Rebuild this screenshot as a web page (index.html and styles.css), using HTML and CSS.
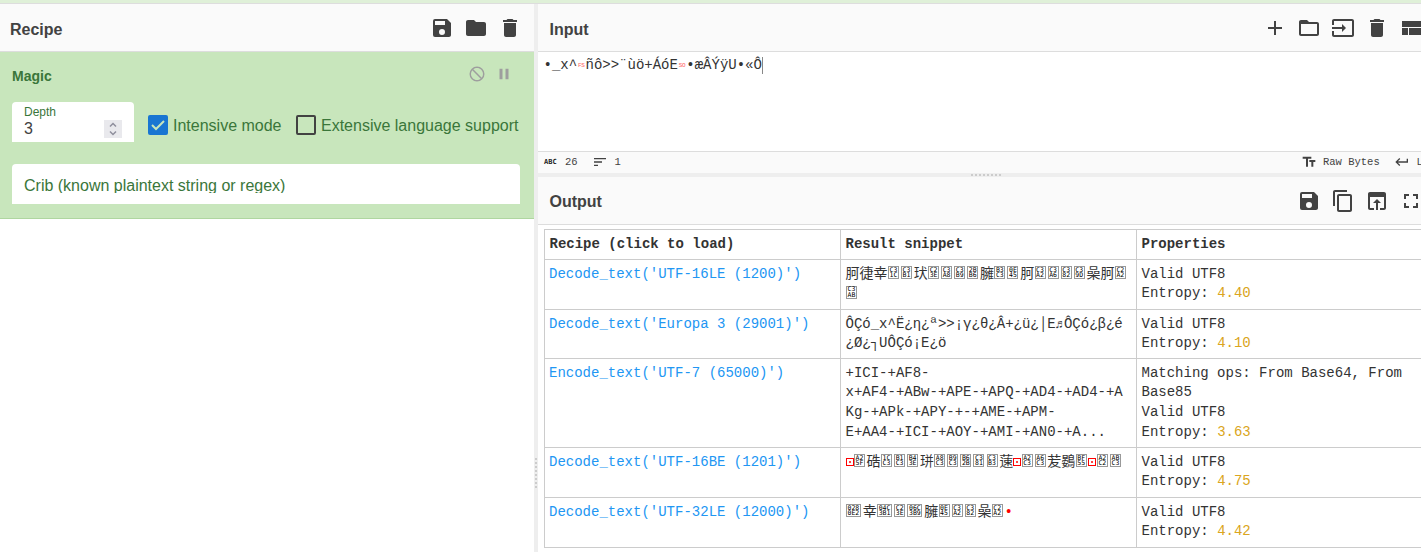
FILE: index.html
```html
<!DOCTYPE html>
<html lang="en">
<head>
<meta charset="utf-8">
<title>Recipe</title>
<link rel="stylesheet" href="styles.css">
</head>
<body>
<div class="banner"></div>
<main class="workspace">
  <section class="recipe">
    <header class="title-bar upper"><h2>Recipe</h2>
      <div class="tools recipe-tools">
        <svg viewBox="0 0 24 24"><path d="M17 3H5a2 2 0 0 0-2 2v14a2 2 0 0 0 2 2h14c1.1 0 2-.9 2-2V7l-4-4zm-5 16a3 3 0 1 1 0-6 3 3 0 0 1 0 6zm3-10H5V5h10v4z"/></svg>
        <svg viewBox="0 0 24 24"><path d="M10 4H4c-1.1 0-2 .9-2 2v12c0 1.1.9 2 2 2h16c1.1 0 2-.9 2-2V8c0-1.100-.9-2-2-2h-8l-2-2z"/></svg>
        <svg viewBox="0 0 24 24"><path d="M6 19c0 1.100.9 2 2 2h8c1.100 0 2-.9 2-2V7H6v12zM19 4h-3.500l-1-1h-5l-1 1H5v2h14V4z"/></svg>
      </div>
    </header>
    <div class="operation">
      <div class="op-head"><b>Magic</b>
        <div class="op-icons">
          <svg viewBox="0 0 24 24"><path d="M12 2a10 10 0 1 0 0 20 10 10 0 0 0 0-20zM4 12c0-4.400 3.600-8 8-8 1.850 0 3.550.63 4.900 1.690L5.690 16.900A7.900 7.900 0 0 1 4 12zm8 8c-1.850 0-3.550-.63-4.900-1.690L18.310 7.100A7.900 7.900 0 0 1 20 12c0 4.400-3.600 8-8 8z" transform="matrix(-1 0 0 1 24 0)"/></svg>
          <svg viewBox="0 0 24 24"><path d="M6 19h4V5H6v14zm8-14v14h4V5h-4z"/></svg>
        </div>
      </div>
      <div class="args">
        <div class="depth"><div><label>Depth</label><span>3</span></div>
          <svg class="spin" viewBox="0 0 18 18"><path d="M6 6.500l3-3 3 3M6 11.500l3 3 3-3"/></svg>
        </div>
        <div class="check first"><svg viewBox="0 0 20 20"><rect width="20" height="20" rx="2" fill="#1976d2"/><path d="M4 10l4 4 8-8" fill="none" stroke="#c8e6bc" stroke-width="2"/></svg><span>Intensive mode</span></div>
        <div class="check"><svg viewBox="0 0 20 20"><rect x="1" y="1" width="18" height="18" rx="1" fill="none" stroke="#424242" stroke-width="2"/></svg><span>Extensive language support</span></div>
      </div>
      <div class="crib"><span>Crib (known plaintext string or regex)</span></div>
    </div>
  </section>
  <div class="gutter-v"><i></i></div>
  <section class="io">
    <header class="title-bar upper"><h2>Input</h2>
      <div class="tools">
        <svg viewBox="0 0 24 24"><path d="M19 13h-6v6h-2v-6H5v-2h6V5h2v6h6v2z"/></svg>
        <svg viewBox="0 0 24 24"><path d="M20 6h-8l-2-2H4c-1.100 0-2 .9-2 2v12c0 1.100.9 2 2 2h16c1.100 0 2-.9 2-2V8c0-1.100-.9-2-2-2zm0 12H4V8h16v10z"/></svg>
        <svg viewBox="0 0 24 24"><path d="M21 3H3c-1.100 0-2 .9-2 2v4h2V5h18v14H3v-4H1v4c0 1.100.9 2 2 2h18c1.100 0 2-.9 2-2V5c0-1.100-.9-2-2-2zM11 16l4-4-4-4v3H1v2h10v3z"/></svg>
        <svg viewBox="0 0 24 24"><path d="M6 19c0 1.100.9 2 2 2h8c1.100 0 2-.9 2-2V7H6v12zM19 4h-3.500l-1-1h-5l-1 1H5v2h14V4z"/></svg>
        <svg viewBox="0 0 24 24"><path d="M3 19h6v-7H3v7zm7 0h12v-7H10v7zM3 5v6h19V5H3z"/></svg>
      </div>
    </header>
    <div class="editor">•_x^<span class="ctl">FS</span>ñô&gt;&gt;¨ùö+ÁóE<span class="ctl">SO</span>•æÂÝÿU•«Ô<span class="caret"></span></div>
    <div class="status">
      <span class="abc">ABC</span><span class="count">26</span>
      <svg viewBox="0 0 24 24"><path d="M3 18h6v-2H3v2zM3 6v2h18V6H3zm0 7h12v-2H3v2z"/></svg><span class="lines">1</span>
      <div class="status-right">
        <svg viewBox="0 0 24 24"><path d="M2.500 4v3h5v12h3V7h5V4h-13zm19 5h-9v3h3v7h3v-7h3V9z"/></svg><span class="raw">Raw Bytes</span>
        <svg viewBox="0 0 24 24"><path d="M19 7v4H5.830l3.580-3.590L8 6l-6 6 6 6 1.410-1.410L5.830 13H21V7z"/></svg><span>LF</span>
      </div>
    </div>
    <div class="gutter-h"><i></i></div>
    <header class="title-bar"><h2>Output</h2>
      <div class="tools out-tools">
        <svg viewBox="0 0 24 24"><path d="M17 3H5a2 2 0 0 0-2 2v14a2 2 0 0 0 2 2h14c1.100 0 2-.9 2-2V7l-4-4zm-5 16a3 3 0 1 1 0-6 3 3 0 0 1 0 6zm3-10H5V5h10v4z"/></svg>
        <svg viewBox="0 0 24 24"><path d="M16 1H4c-1.100 0-2 .9-2 2v14h2V3h12V1zm3 4H8c-1.100 0-2 .9-2 2v14c0 1.100.9 2 2 2h11c1.100 0 2-.9 2-2V7c0-1.100-.9-2-2-2zm0 16H8V7h11v14z"/></svg>
        <svg viewBox="0 0 24 24"><path d="M19 3H5c-1.110 0-2 .9-2 2v14c0 1.100.89 2 2 2h4v-2H5V8h14v11h-4v2h4c1.100 0 2-.9 2-2V5c0-1.100-.89-2-2-2zm-7 7l-4 4h3v7h2v-7h3l-4-4z"/></svg>
        <svg viewBox="0 0 24 24"><path d="M7 14H5v5h5v-2H7v-3zm-2-4h2V7h3V5H5v5zm12 7h-3v2h5v-5h-2v3zM14 5v2h3v3h2V5h-5z"/></svg>
      </div>
    </header>
    <div class="results">
      <div class="cell th">Recipe (click to load)</div><div class="cell th">Result snippet</div><div class="cell th">Properties</div>

      <div class="cell link">Decode_text('UTF-16LE (1200)')</div>
      <div class="cell">胢徢幸<s>C3<br>1C</s><s>C3<br>B1</s>㺴<s>C2<br>3E</s><s>C3<br>A8</s><s>C3<br>B9</s><s>2B<br>B6</s>臃<s>B3<br>C3</s><s>0E<br>45</s>胢<s>C3<br>A2</s><s>C3<br>A6</s><s>C3<br>82</s><s>C3<br>9D</s>喿胢<s>C2<br>A2</s><br><s>C3<br>AB</s></div>
      <div class="cell">Valid UTF8<br>Entropy: <em>4.40</em></div>

      <div class="cell link">Decode_text('Europa 3 (29001)')</div>
      <div class="cell">ÔÇó_x^Ë¿η¿ª&gt;&gt;¡γ¿θ¿Â+¿ü¿│E<span class="note">♬</span>ÔÇó¿β¿é<br>¿Ø¿┐UÔÇó¡E¿ö</div>
      <div class="cell">Valid UTF8<br>Entropy: <em>4.10</em></div>

      <div class="cell link">Encode_text('UTF-7 (65000)')</div>
      <div class="cell">+ICI-+AF8-<br>x+AF4-+ABw-+APE-+APQ-+AD4-+AD4-+A<br>Kg-+APk-+APY-+-+AME-+APM-<br>E+AA4-+ICI-+AOY-+AMI-+AN0-+A...</div>
      <div class="cell">Matching ops: From Base64, From<br>Base85<br>Valid UTF8<br>Entropy: <em>3.63</em></div>

      <div class="cell link">Decode_text('UTF-16BE (1201)')</div>
      <div class="cell"><u></u><s>A2<br>5F</s>硞<s>1C<br>C3</s><s>B1<br>C3</s><s>B4<br>3E</s>㻂<s>A8<br>C3</s><s>B9<br>C3</s><s>B6<br>2B</s><s>C3<br>81</s><s>C3<br>B3</s>䔎<u></u><s>A2<br>C3</s><s>A6<br>C3</s>苃鷃<s>BF<br>55</s><u></u><s>A2<br>C2</s><s>AB<br>C3</s></div>
      <div class="cell">Valid UTF8<br>Entropy: <em>4.75</em></div>

      <div class="cell link">Decode_text('UTF-32LE (12000)')</div>
      <div class="cell"><s class="w">028<br>0E2</s>幸<s class="w">04C<br>3B1</s><s>C2<br>3E</s><s class="w">06C<br>3B9</s>臃<s>0E<br>45</s><s>C3<br>A2</s><s>C3<br>82</s>喿<s>C2<br>A2</s><span class="red">•</span></div>
      <div class="cell">Valid UTF8<br>Entropy: <em>4.42</em></div>
    </div>
  </section>
</main>
</body>
</html>
```
FILE: styles.css
```css
* { box-sizing: border-box; }
body { margin: 0; width: 1421px; height: 552px; overflow: hidden; background: #fff; color: #424242; font-family: "Liberation Sans", Arial, sans-serif; display: flex; flex-direction: column; }
svg { display: block; flex: none; fill: #424242; }
.banner { flex: none; height: 4px; background: #dff0d8; border-bottom: 1px solid #ddd; }
.workspace { flex: 1; display: flex; min-height: 0; }
.recipe { width: 534px; flex: none; }
.title-bar { flex: none; height: 48px; display: flex; align-items: center; background: #fafafa; border-bottom: 1px solid #ddd; padding: 2px 0 0 10px; overflow: hidden; }
h2 { margin: 0; font-size: 16px; line-height: 24px; font-weight: bold; }
.upper h2 { padding-top: 2px; }
.tools { display: flex; gap: 10px; margin-left: auto; margin-right: -2px; margin-bottom: 1px; }
.tools svg { width: 24px; height: 24px; }
.recipe-tools { margin-right: 12px; }
.io .title-bar { padding-left: 11.500px; }

.operation { height: 167px; background: #c8e6bc; border-bottom: 1px solid #afd6a0; color: #3a763a; padding: 13px 14px 0 12px; }
.op-head { display: flex; justify-content: space-between; height: 37px; font-size: 14px; line-height: 22px; }
.op-icons { display: flex; gap: 9.500px; padding-right: 7px; }
.op-icons svg { width: 18px; height: 18px; fill: #9e9e9e; }
.args { display: flex; height: 40px; }
.depth { width: 122px; height: 40px; padding: 2px 12px 0; background: #fff; border-radius: 4px 4px 0 0; display: flex; justify-content: space-between; }
.depth label { display: block; font-size: 12px; line-height: 16px; }
.depth span { display: block; font-size: 16px; line-height: 18px; color: #424242; }
.spin { width: 18px; height: 18px; margin-top: 16px; background: #e9e9ed; fill: none; stroke: #8f8f9d; stroke-width: 1.500; }
.check { display: flex; height: 20px; margin: 13px 0 0 14.500px; font-size: 16px; line-height: 21px; gap: 5px; white-space: nowrap; }
.check.first { margin-left: 14px; }
.check.first span { width: 108.500px; }
.check svg { width: 20px; height: 20px; }
.crib { margin-top: 22px; height: 40px; padding: 12px 12px 0; background: #fff; border-radius: 4px 4px 0 0; font-size: 16px; }
.crib span { display: block; height: 17px; line-height: 19px; overflow: hidden; }

.gutter-v { width: 4px; flex: none; background: #eee; padding-top: 454px; }
.gutter-v i { display: block; margin-left: 1px; width: 2px; height: 30px; background: repeating-linear-gradient(#ccc 0 2px, transparent 2px 4px); }
.gutter-h { height: 4px; flex: none; background: #eee; padding: 1px 0 0 433px; }
.gutter-h i { display: block; width: 30px; height: 2px; background: repeating-linear-gradient(90deg, #ccc 0 2px, transparent 2px 4px); }

.io { flex: 1; min-width: 0; overflow: hidden; display: flex; flex-direction: column; }
.editor { flex: none; height: 99px; padding: 4px 6px 0 5.500px; font: 14px/19.600px "Liberation Mono", monospace; color: #333; white-space: pre; display: flex; }
.ctl { width: 8.400px; text-align: center; font-size: 6px; letter-spacing: -.3px; color: #f66; }
.caret { width: 1px; height: 17px; margin-top: 1px; background: #888; }
.status { flex: none; height: 22px; display: flex; align-items: center; background: #fafafa; border-top: 1px solid #ddd; padding: 0 0 2px 6px; font: 10.500px/16px "Liberation Mono", monospace; white-space: pre; }
.status svg { width: 16px; height: 16px; }
.abc { width: 21px; font: bold 7px/16px "DejaVu Sans Mono", monospace; color: #222; }
.count { width: 27px; }
.lines { margin-left: 6.500px; }
.status-right { margin-left: auto; margin-right: -8px; display: flex; width: 128px; }
.raw { width: 72px; margin-left: 6px; }
.status-right span:last-child { margin-left: 6px; }

.results { width: 890px; margin: 4px 0 0 6px; display: grid; grid-template-columns: 296px 296px 297px; grid-template-rows: 30px 50px 49px 89px 50px 50px; border-top: 1px solid #ccc; border-left: 1px solid #ccc; font: 14px/19.800px "Liberation Mono", "Noto Sans CJK JP", monospace; color: #333; }
.cell { padding: 4.600px 4px 0 4.500px; border-right: 1px solid #ccc; border-bottom: 1px solid #ccc; white-space: nowrap; overflow: hidden; }
.th { font-weight: bold; }
.link { color: #2196f3; padding-left: 4px; }
.cell em { font-style: normal; color: #daa520; }
.cell s { display: inline-block; width: 11px; height: 13px; margin: 0 1.700px 0 .4px; border: 1px solid #999; padding-top: .5px; vertical-align: .6px; text-decoration: none; text-align: center; font: 6.500px/5.500px "DejaVu Sans Mono", monospace; color: #000; }
.cell s.w { width: 15px; margin-right: 1.800px; }
.cell u { display: inline-block; width: 8px; height: 8px; border: 1px solid #f00; background: linear-gradient(#f44, #f44) center / 2px 2px no-repeat; }
.note { display: inline-block; width: 8.400px; font-size: 12px; line-height: 10px; }
.red { color: #f00; }
```
